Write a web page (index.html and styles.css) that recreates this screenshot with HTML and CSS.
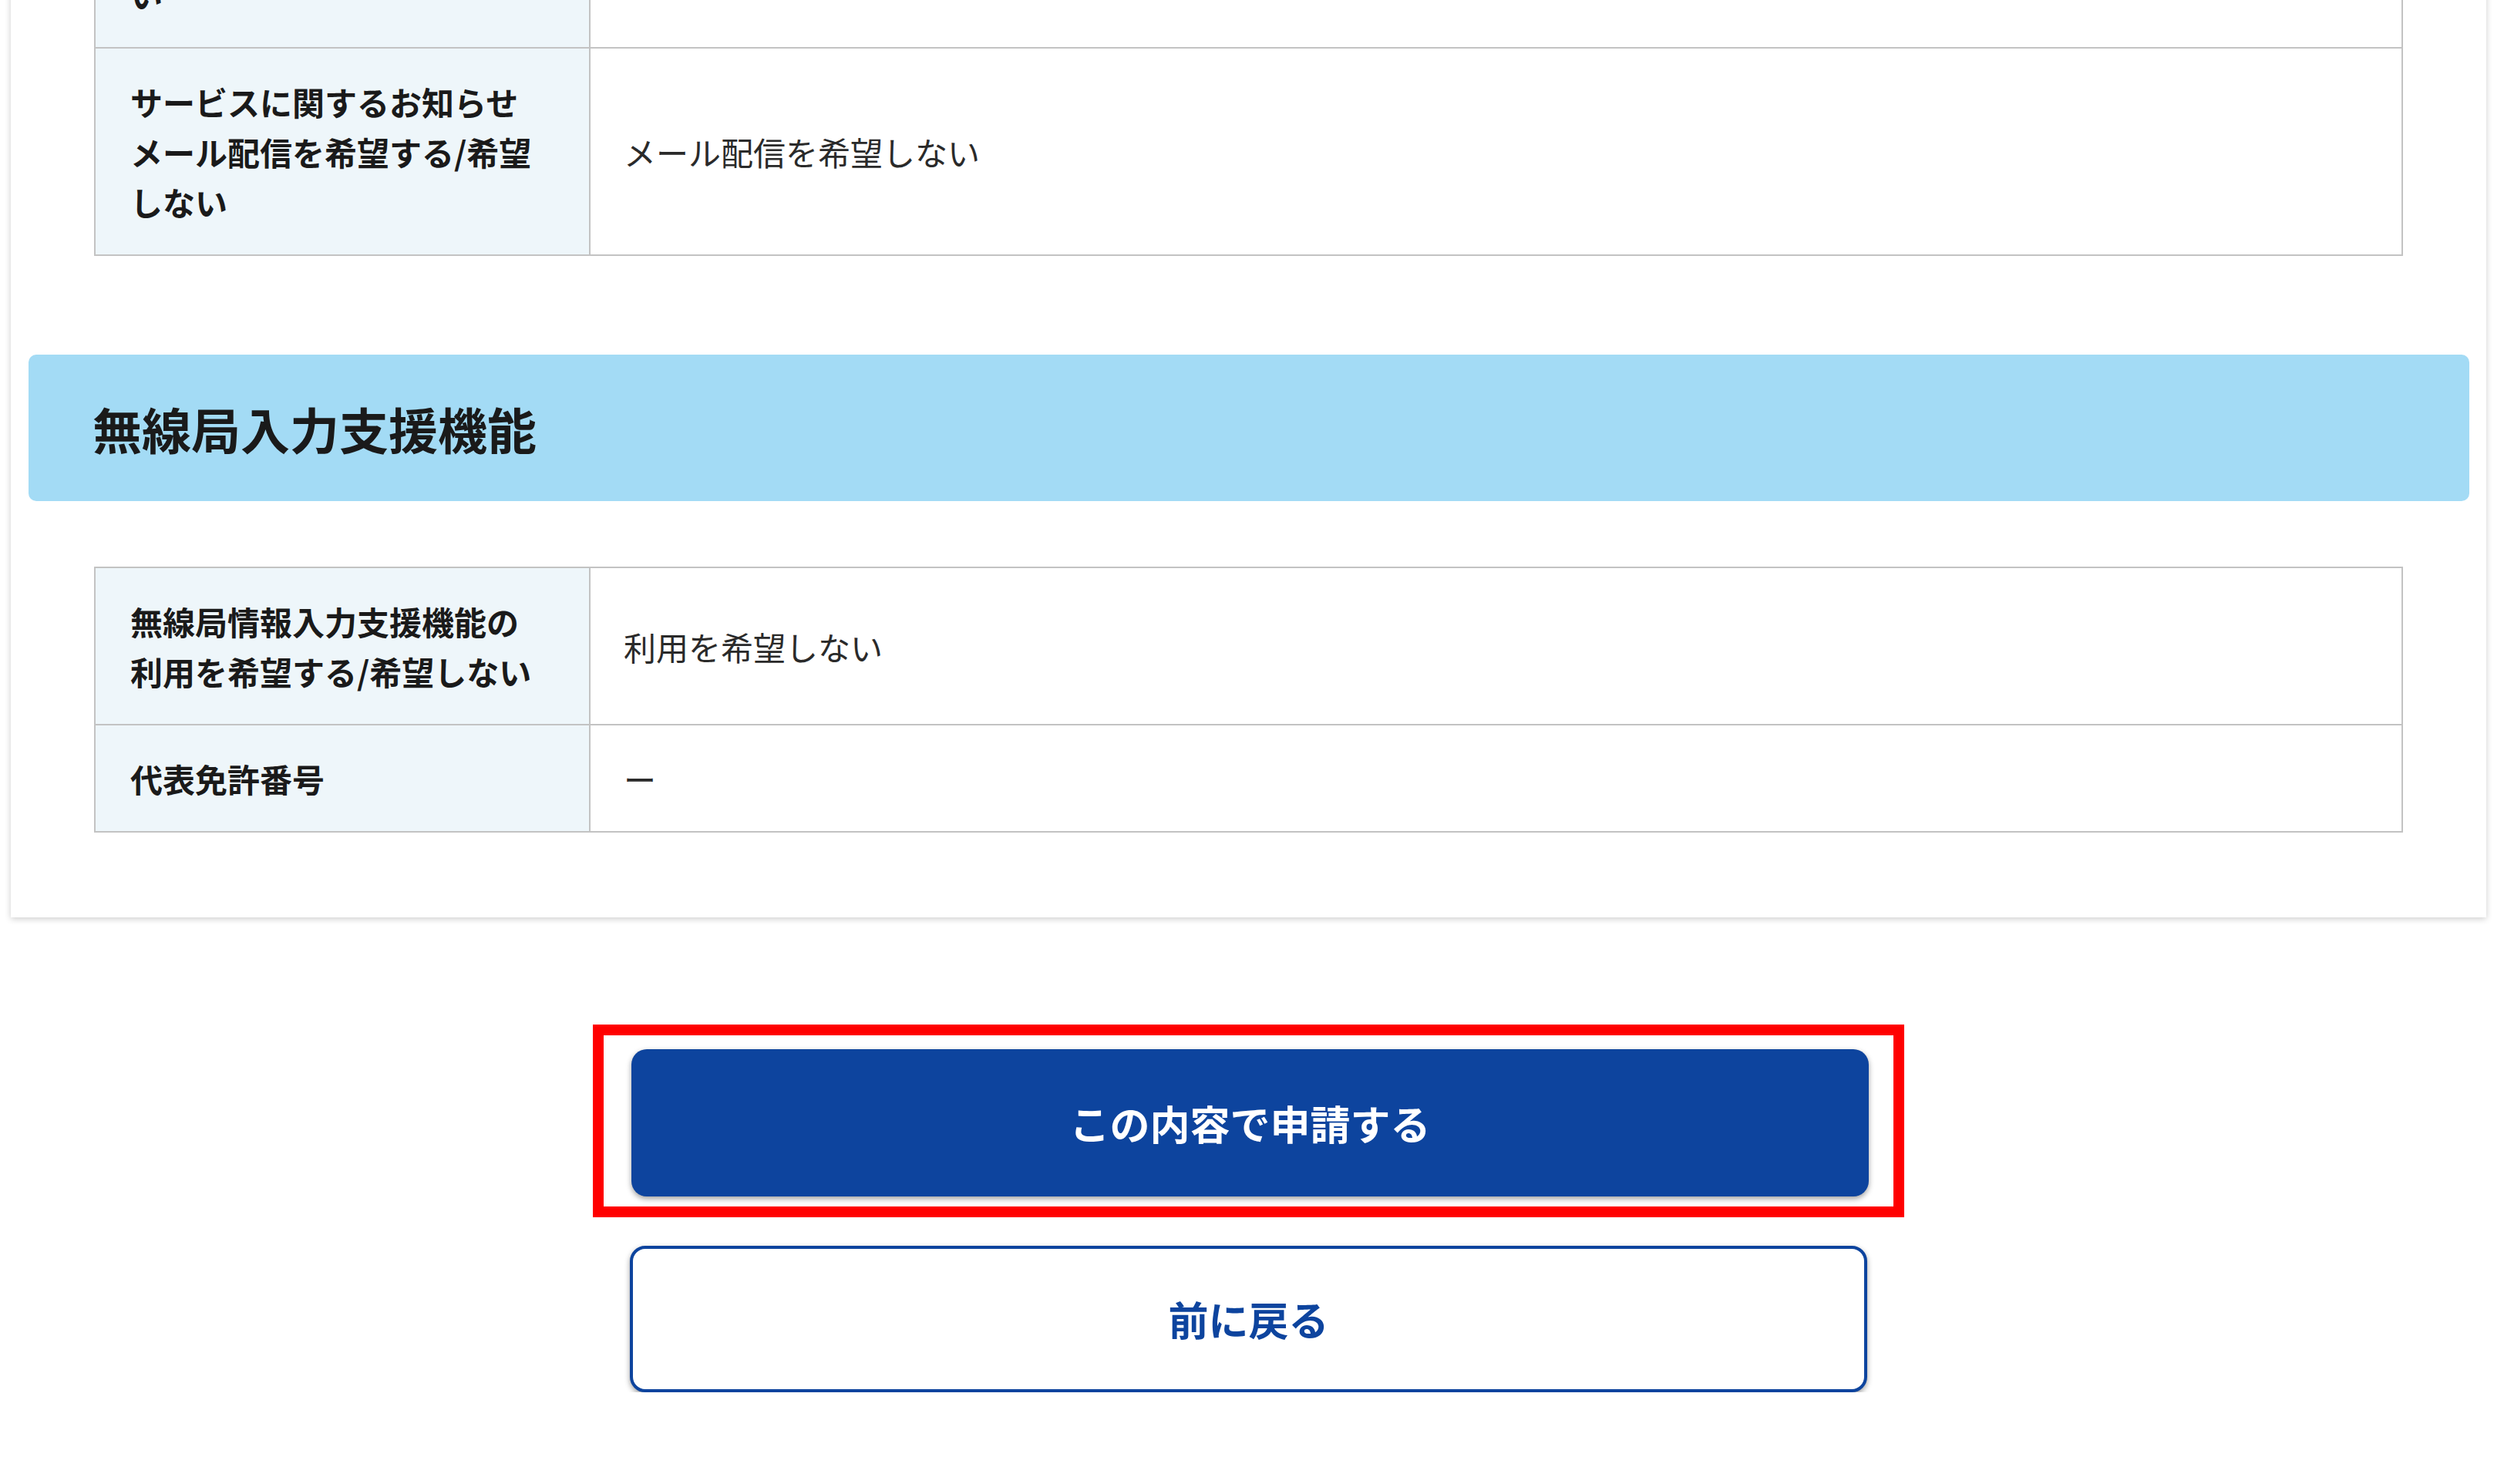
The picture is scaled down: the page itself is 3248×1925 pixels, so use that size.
FILE: index.html
```html
<!DOCTYPE html>
<html lang="ja">
<head>
<meta charset="utf-8">
<title>申請内容の確認</title>
<link rel="stylesheet" href="styles.css">
</head>
<body>
<div class="page">
  <section class="card">
    <table class="info-table">
      <tr>
        <th>メールマガジンの配信を<br>希望する/希望しな<br>い</th>
        <td>メール配信を希望しない</td>
      </tr>
      <tr>
        <th>サービスに関するお知らせ<br>メール配信を希望する/希望<br>しない</th>
        <td>メール配信を希望しない</td>
      </tr>
    </table>

    <h2 class="section-title">無線局入力支援機能</h2>

    <table class="info-table">
      <tr>
        <th>無線局情報入力支援機能の<br>利用を希望する/希望しない</th>
        <td>利用を希望しない</td>
      </tr>
      <tr>
        <th>代表免許番号</th>
        <td>ー</td>
      </tr>
    </table>
  </section>

  <div class="actions">
    <div class="highlight">
      <button class="btn btn-primary" type="button">この内容で申請する</button>
    </div>
    <button class="btn btn-secondary" type="button">前に戻る</button>
  </div>
</div>
</body>
</html>
```

FILE: styles.css
```css
* {
  box-sizing: border-box;
}

html, body {
  margin: 0;
  padding: 0;
  background: #ffffff;
}

body {
  font-family: "Noto Sans CJK JP", "Noto Sans", sans-serif;
  color: #1a1a1a;
  overflow: hidden;
}

.page {
  width: 3211px;
  margin: -208px 0 0 14px;
}

.card {
  background: #ffffff;
  box-shadow: 0 2px 8px rgba(0, 0, 0, 0.2);
  padding: 0 22px 110px 23px;
}

.info-table {
  width: 2995px;
  margin: 0 85px;
  border-collapse: collapse;
  table-layout: fixed;
}

.info-table th,
.info-table td {
  border: 2px solid #c3c3c3;
  padding: 36px 44px 36px 45px;
  font-size: 42px;
  line-height: 65px;
  text-align: left;
  vertical-align: middle;
}

.info-table td {
  padding-left: 43px;
}

.info-table th {
  width: 642px;
  background: #eef6fa;
  font-weight: 700;
  color: #1a1a1a;
}

.info-table td {
  background: #ffffff;
  font-weight: 400;
  color: #2a2a2a;
}

.section-title {
  margin: 128px 0 85px;
  height: 190px;
  display: flex;
  align-items: center;
  padding: 0 0 0 83px;
  background: #a3dbf5;
  border-radius: 10px;
  font-size: 64px;
  font-weight: 700;
  line-height: 1;
  color: #1a1a1a;
}

.actions {
  display: flex;
  flex-direction: column;
  align-items: center;
  padding-top: 139px;
}

.highlight {
  border: 14px solid #ff0000;
  padding: 18px 32px 13px 36px;
  background: #ffffff;
}

.btn {
  display: flex;
  align-items: center;
  justify-content: center;
  width: 1605px;
  border-radius: 20px;
  font-family: "Noto Sans CJK JP", "Noto Sans", sans-serif;
  font-size: 52px;
  font-weight: 700;
  line-height: 1;
  cursor: pointer;
  box-shadow: 0 3px 7px rgba(0, 0, 0, 0.38);
}

.btn-primary {
  height: 191px;
  background: #0d449e;
  color: #ffffff;
  border: none;
}

.btn-secondary {
  margin-top: 37px;
  height: 190px;
  background: #ffffff;
  color: #0d449e;
  border: 4px solid #0d449e;
}
```
